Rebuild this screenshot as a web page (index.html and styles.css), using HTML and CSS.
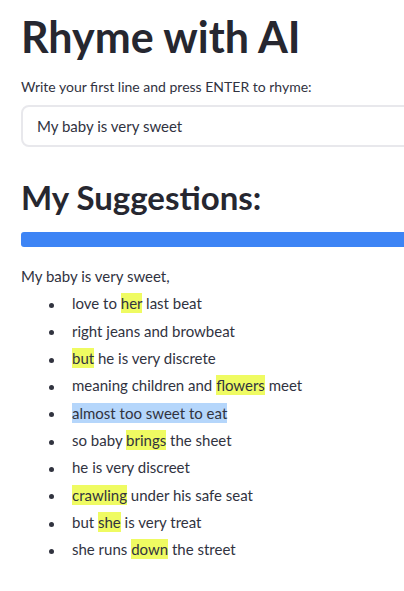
FILE: index.html
```html
<!DOCTYPE html>
<html lang="en">
<head>
  <meta charset="UTF-8">
  <meta name="viewport" content="width=device-width, initial-scale=1.0">
  <title>Rhyme with AI</title>
  <link rel="stylesheet" href="styles.css">
</head>
<body>

<div class="main">
  <h1 class="title">Rhyme with AI</h1>
  <label class="label" for="line">Write your first line and press ENTER to rhyme:</label>
  <div class="input-box">
    <input id="line" type="text" value="My baby is very sweet">
  </div>

  <h2 class="subtitle">My Suggestions:</h2>
  <div class="progress"><div class="progress-fill" style="width: 100%;"></div></div>

  <p class="first">My baby is very sweet,</p>
  <ul class="rhymes">
    <li>love to <mark>her</mark> last beat</li>
    <li>right jeans and browbeat</li>
    <li><mark>but</mark> he is very discrete</li>
    <li>meaning children and <mark>flowers</mark> meet</li>
    <li><mark class="pick">almost too sweet to eat</mark></li>
    <li>so baby <mark>brings</mark> the sheet</li>
    <li>he is very discreet</li>
    <li><mark>crawling</mark> under his safe seat</li>
    <li>but <mark>she</mark> is very treat</li>
    <li>she runs <mark>down</mark> the street</li>
  </ul>
</div>

</body>
</html>
```

FILE: styles.css
```css
body {
  margin: 0;
  font-family: Lato, 'Noto Sans', sans-serif;
  color: #31333f;
  background-color: #fff;
  overflow: hidden;
}
.main {
  padding: 11px 0 0 21px;
  width: 420px;
}
.title {
  margin: 0;
  font-size: 43px;
  font-weight: 700;
  line-height: 1.2;
  color: #262730;
}
.label {
  display: block;
  margin-top: 16px;
  font-size: 14px;
  line-height: 1.2;
}
.input-box {
  margin-top: 10px;
  height: 38px;
  border: 2px solid #e8e8ec;
  border-radius: 8px;
  display: flex;
  align-items: center;
}
.input-box input {
  border: none;
  outline: none;
  background: transparent;
  font-family: inherit;
  font-size: 15px;
  color: #31333f;
  padding: 0 0 0 14px;
  width: 100%;
}
.subtitle {
  margin: 31px 0 0;
  font-size: 33px;
  font-weight: 700;
  line-height: 1.2;
  color: #262730;
}
.progress {
  margin-top: 14px;
  height: 15px;
  border-radius: 3px;
  background-color: #f0f2f6;
  overflow: hidden;
}
.progress-fill {
  height: 100%;
  background-color: #3d84f5;
}
.first {
  margin: 16px 0 0;
  font-size: 15px;
  line-height: 27.33px;
}
.rhymes {
  margin: 0;
  padding-left: 28px;
  list-style: none;
  font-size: 15px;
  line-height: 27.33px;
}
.rhymes li::before {
  content: "";
  display: inline-block;
  width: 5px;
  height: 5px;
  border-radius: 50%;
  background-color: #31333f;
  margin-right: 18px;
  vertical-align: middle;
}
mark {
  background-color: #effb62;
  color: inherit;
  padding: 1px 0;
}
mark.pick {
  background-color: #b5d6fb;
}
```
